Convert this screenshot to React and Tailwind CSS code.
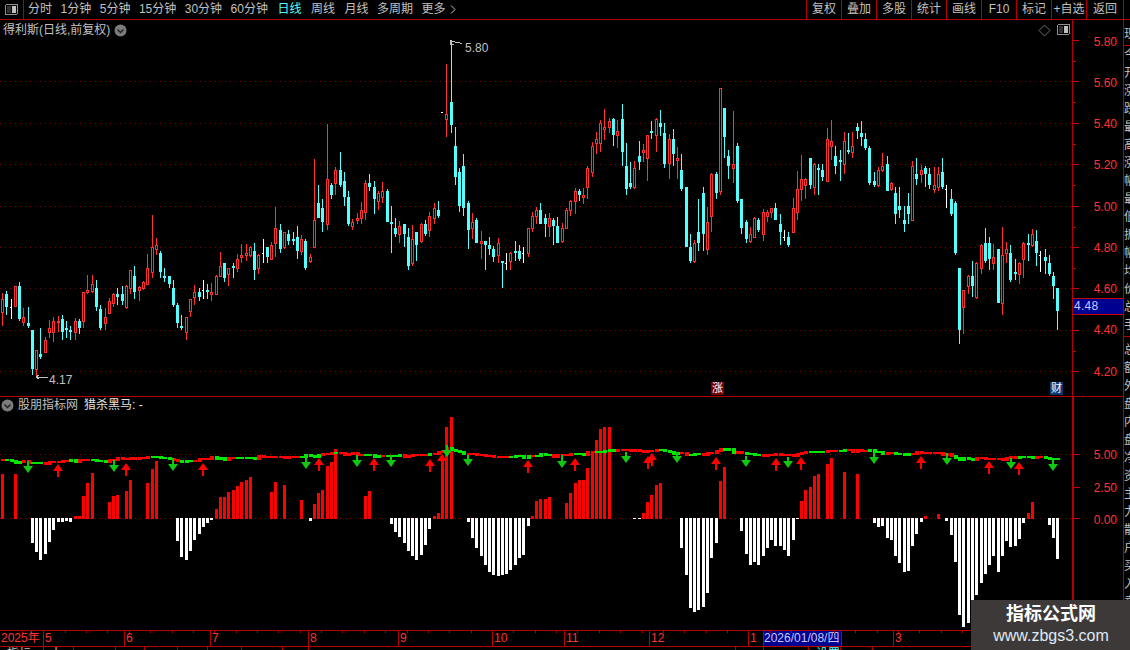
import React from 'react';

const RED = '#ff3232';
const CYAN = '#54ffff';
const PITCH = 4.273;
const barX = (i) => Math.floor(2.5 + i * PITCH);

// t wickTop bodyTop bodyBottom wickBottom, in screen pixels
const CANDLES = `r 293 299 313 326,c 291 294 307 315,w 299 307 308 319,r 286 286 307 307,c 282 286 319 321,r 308 317 323 326,c 307 323 326 328,c 330 330 369 375,r 350 350 370 377,c 328 354 357 359,
r 337 340 353 353,r 320 328 333 338,r 317 321 333 342,r 316 321 323 332,c 315 319 332 340,c 321 328 330 338,c 326 330 332 340,r 318 321 333 340,c 319 321 328 334,r 292 292 322 328,
r 275 290 293 294,r 275 284 292 293,c 280 288 307 311,c 305 309 328 330,r 308 317 324 330,r 298 301 314 314,r 293 294 304 307,c 288 294 297 305,c 286 294 301 305,r 285 286 308 309,
r 270 270 289 294,c 266 276 292 299,r 286 287 291 301,r 281 282 289 290,r 254 268 285 285,r 215 247 273 278,r 238 245 250 255,c 251 253 272 278,c 268 276 278 282,c 276 276 284 288,
c 280 288 305 307,c 303 305 323 328,c 315 326 328 330,r 317 317 333 340,r 299 299 312 317,r 285 292 298 305,c 288 292 297 301,w 280 290 291 299,c 284 290 292 299,r 283 292 295 301,
r 275 276 295 295,r 252 266 277 277,c 263 263 278 282,r 268 268 275 286,c 263 266 268 278,r 254 259 269 272,r 244 255 258 263,r 244 253 256 261,r 246 247 256 257,c 243 251 270 280,
r 254 255 269 274,w 239 253 254 263,c 247 247 257 263,r 242 245 260 260,r 207 228 244 257,c 224 230 249 253,r 232 232 248 249,c 230 234 241 245,c 232 239 241 245,c 226 237 251 259,
r 235 239 252 255,c 239 241 268 270,r 254 257 262 263,r 159 220 248 248,c 185 203 218 218,c 199 208 222 232,r 124 179 225 230,c 183 185 195 199,r 167 170 184 195,c 152 170 185 187,
c 172 181 197 206,c 191 197 224 226,r 219 222 227 230,r 213 218 221 224,r 202 210 219 224,r 180 183 213 220,c 174 183 187 191,c 181 187 199 214,r 191 193 202 210,r 182 191 198 203,
c 189 191 222 222,c 206 222 224 253,c 218 228 234 237,r 221 226 235 243,c 224 224 234 247,c 228 237 266 270,r 225 239 264 266,c 232 232 245 261,r 223 224 242 243,c 220 224 234 236,
r 212 216 231 237,r 203 208 219 224,c 201 210 216 218,w 112 112 113 113,r 64 114 120 137,c 40 102 125 133,c 127 146 177 185,c 168 172 206 212,c 154 166 208 216,c 201 203 230 249,
r 213 222 229 239,c 218 220 243 243,r 231 241 244 259,c 241 241 245 270,c 237 245 249 255,c 246 249 257 262,r 238 243 256 263,c 261 261 263 288,w 253 263 264 270,r 252 253 262 270,
c 241 251 253 261,c 245 251 259 261,w 247 253 254 263,r 228 228 254 257,r 212 216 229 232,r 207 210 217 224,c 203 210 224 224,c 214 218 224 237,r 213 218 227 237,c 218 220 226 245,
c 217 226 243 243,r 223 228 242 243,r 208 210 229 229,r 200 201 211 216,r 188 191 202 214,c 189 191 195 201,r 188 195 198 204,r 166 168 188 199,r 142 146 173 177,r 132 139 144 154,
r 120 123 144 152,r 109 127 130 140,r 118 121 128 133,c 118 119 135 146,r 120 131 136 148,c 104 119 152 166,c 143 166 189 195,c 162 183 187 189,r 161 168 188 189,c 141 156 162 170,
r 144 150 153 162,r 135 135 159 181,c 121 131 133 139,r 118 119 136 152,c 110 123 127 136,c 123 133 164 168,r 134 139 164 179,c 129 139 154 166,r 147 158 161 179,c 154 170 189 191,
c 187 187 247 247,c 234 247 261 263,r 240 243 262 263,c 199 232 243 251,c 187 193 234 251,r 207 222 250 255,r 173 174 217 232,c 172 174 193 199,r 88 88 192 195,c 108 108 137 158,
c 150 156 166 179,r 111 164 169 183,c 143 146 201 203,c 199 199 228 234,c 220 222 239 243,r 227 234 242 243,r 217 218 238 238,c 218 220 230 232,r 209 212 235 241,r 210 212 217 222,
r 208 208 213 218,c 203 208 220 220,c 214 224 232 245,w 230 237 238 241,c 232 237 245 247,r 198 208 233 233,r 171 189 213 220,r 155 179 190 201,r 178 179 186 199,c 158 158 185 189,
r 163 164 188 195,c 164 168 170 195,c 164 170 177 181,r 128 139 182 182,r 120 141 147 160,c 146 156 166 174,c 150 160 162 181,r 132 141 165 174,c 133 150 152 154,r 132 146 153 158,
c 123 127 131 139,c 121 133 137 146,c 133 139 148 150,c 146 148 183 185,c 172 181 185 187,r 167 170 186 187,r 153 166 171 172,c 156 164 191 191,r 182 183 190 191,c 187 193 214 224,
c 187 206 210 218,c 206 220 224 232,c 193 206 214 224,r 161 166 221 221,c 158 174 179 185,r 165 170 175 183,c 166 168 174 187,c 168 174 185 189,r 167 185 190 193,r 167 174 188 191,
c 158 172 187 189,w 185 189 190 208,c 189 199 214 216,c 201 203 253 255,c 268 268 330 344,r 290 290 308 334,r 275 276 287 294,c 261 276 286 297,r 262 263 298 299,r 244 245 269 274,
c 228 243 261 263,c 237 243 259 270,r 244 257 264 270,c 249 249 303 303,r 227 255 304 315,r 242 249 254 263,c 245 253 280 282,c 259 272 274 280,r 262 263 275 284,r 242 243 260 278,
c 234 243 245 261,r 229 234 246 247,c 230 241 253 266,w 251 255 256 272,c 249 257 261 274,c 255 263 274 276,c 272 276 286 299,c 288 288 311 330`
  .split(',')
  .map((s) => {
    const p = s.trim().split(' ');
    return { t: p[0], a: +p[1], b: +p[2], c: +p[3], d: +p[4] };
  });

// histogram height from the zero line: red up, white (negative) down
const HIST_RUNS = [
  [0, 45, 0, 0, 45],
  [7, -25, -34, -42, -36, -24, -12, -4, -4, -3, -4, 3, 3, 23, 36, 46],
  [25, 17, 23, 24, 0, 28, 39, 0, 0, 0, 36, 50, 58],
  [41, -23, -39, -42, -33, -22, -16, -9, -5, -2, 10, 22, 22, 27, 29, 33, 37, 39, 42],
  [63, 27, 37, 0, 34, 0, 0, 0, 19, 0, -3, 15, 26, 29, 53, 57, 70],
  [85, 23, 28],
  [91, -6, -14, -19, -25, -33, -38, -42, -37, -27, -11, 3, 6, 63, 92, 102],
  [109, -4, -20, -30, -38, -47, -54, -57, -58, -57, -56, -52, -47, -40, -37, -8, 3, 18, 20, 20, 22],
  [132, 16, 26, 36, 39, 39, 51, 68, 79, 90, 92, 92],
  [148, -1, -1, 6, 17, 24, 34, 36],
  [159, -30, -57, -90, -94, -92, -89, -75, -40, -25, 38, 52],
  [173, -13, -36, -47, -44, -47, -38, -30, -22, -28, -28, -32, -38, -22, -1, 18, 29, 32, 43, 45, 0, 55, 61],
  [197, 47, 0, 0, 45],
  [204, -5, -9, -8, -20, -22, -38, -45, -54, -53, -28, -16, -4, 3, 0, 0, 5],
  [221, -3, -17, -44, -97, -109, -105, -100, -77, -65, -56, -47, -38, -54, -38, -23, -29, -28, -21, -5, 6, 17],
  [245, -7, -20, -41],
];
const hist = new Array(248).fill(0);
HIST_RUNS.forEach(([start, ...vals]) => vals.forEach((v, k) => (hist[start + k] = v)));

const BAND = [[2,460],[33,463],[50,462],[83,460],[103,461],[133,458],[153,457],[167,458],[183,462],[200,459],[233,458],[267,457],[300,457],[313,456],[323,454],[337,453],[357,455],[393,456],[427,455],[447,449],[463,453],[493,457],[527,456],[560,455],[587,453],[613,450],[643,451],[660,450],[687,455],[710,453],[720,449],[737,452],[745,454],[760,455],[790,455],[807,452],[830,451],[857,450],[873,452],[890,453],[903,455],[910,453],[940,453],[953,456],[958,460],[973,458],[997,459],[1013,458],[1033,456],[1057,460]];

const bandY = (x) => {
  for (let k = 1; k < BAND.length; k++) {
    if (x <= BAND[k][0]) {
      const [x0, y0] = BAND[k - 1];
      const [x1, y1] = BAND[k];
      return y0 + ((y1 - y0) * (x - x0)) / (x1 - x0);
    }
  }
  return 460;
};

const RED_ARROWS = [[58,464],[126,463],[203,463],[319,458],[374,458],[430,459],[442,454],[528,460],[575,458],[648,456],[652,453],[716,457],[776,458],[801,457],[921,456],[989,461],[1019,462]];
const GREEN_ARROWS = [[28,461,473],[114,460,472],[173,458,471],[306,457,469],[357,455,467],[391,455,467],[447,445,457],[468,455,466],[562,455,468],[626,452,463],[677,452,463],[746,456,467],[788,457,468],[874,453,464],[947,453,465],[1011,458,469],[1053,460,471]];

const PRICES = ['5.80', '5.60', '5.40', '5.20', '5.00', '4.80', '4.60', '4.40', '4.20'];
const NAV = ['分时', '1分钟', '5分钟', '15分钟', '30分钟', '60分钟', '日线', '周线', '月线', '多周期'];
const TOOLS = ['复权', '叠加', '多股', '统计', '画线', 'F10', '标记', '+自选'];
const SIDE_TOP = '现价';
const SIDE_MID = '今开涨跌最高涨幅最低振幅均价总手量比现手换手';
const SIDE_LOW = '总额外盘内盘净资主力散户买入卖出市盈市净流通总股';

const CircleChevron = () => (
  <svg width="13" height="13" viewBox="0 0 13 13">
    <circle cx="6.5" cy="6.5" r="6" fill="#7c7c7c" />
    <path d="M3.5 5.5 L6.5 8.5 L9.5 5.5" fill="none" stroke="#222" strokeWidth="1.5" />
  </svg>
);

const PanelIcon = () => (
  <svg width="13" height="11" viewBox="0 0 13 11" shapeRendering="crispEdges">
    <rect x="0.5" y="0.5" width="12" height="10" rx="1.5" fill="#000" stroke="#909090" />
    <rect x="2" y="2" width="4" height="7" fill="#333" />
    <rect x="7" y="2" width="4" height="7" fill="#c0c0c0" />
  </svg>
);

const Candles = () => (
  <svg className="block" width="1072" height="376" viewBox="0 20 1072 376" shapeRendering="crispEdges">
    {[81, 123, 164, 206, 247, 288, 330, 371].map((y) => (
      <line key={y} x1="0" x2="1072" y1={y + 0.5} y2={y + 0.5} stroke="#8a0000" strokeDasharray="1 4" />
    ))}
    {CANDLES.map((k, i) => {
      const x = barX(i);
      if (k.t === 'w') {
        return (
          <g key={i} fill="#fff">
            <rect x={x} y={k.a} width="1" height={k.d - k.a} />
            <rect x={x - 1} y={k.b} width="2" height="1" />
          </g>
        );
      }
      const color = k.t === 'r' ? RED : CYAN;
      return (
        <g key={i}>
          <rect x={x} y={k.a} width="1" height={k.d - k.a} fill={color} />
          {k.t === 'r' ? (
            <rect x={x - 0.5} y={k.b + 0.5} width="2" height={Math.max(k.c - k.b - 1, 1)} fill="#000" stroke={color} />
          ) : (
            <rect x={x - 1} y={k.b} width="3" height={Math.max(k.c - k.b, 1)} fill={color} />
          )}
        </g>
      );
    })}
    <path d="M450 41h5M451 44h3M455 43l3-1 4 2" fill="none" stroke="#c0c0c0" />
    <rect x="450" y="40" width="1" height="5" fill="#c0c0c0" />
    <path d="M36 377h12M36 377l3-2M36 377l3 2" fill="none" stroke="#c0c0c0" />
  </svg>
);

const Indicator = () => {
  const blocks = [];
  let prev = Math.round(bandY(barX(0)));
  hist.forEach((_, i) => {
    const x = barX(i);
    const y = Math.round(bandY(x) + (i % 7 === 3 ? 1.4 : 0) - (i % 11 === 5 ? 1.2 : 0));
    const green = Math.sin(i * 0.9) + Math.sin(i * 0.37) > 0.15;
    blocks.push(
      <rect
        key={i}
        x={x - 1}
        y={Math.min(prev, y) - 1}
        width="4"
        height={Math.abs(y - prev) + 2}
        fill={green ? '#00e800' : '#ff0000'}
      />
    );
    prev = y;
  });
  return (
    <svg className="block" width="1072" height="233" viewBox="0 397 1072 233" shapeRendering="crispEdges">
      <line x1="0" x2="1072" y1="454.5" y2="454.5" stroke="#8a0000" strokeDasharray="1 4" />
      <line x1="0" x2="1072" y1="518.5" y2="518.5" stroke="#8a0000" strokeDasharray="1 4" />
      {hist.map((v, i) =>
        v === 0 ? null : v > 0 ? (
          <rect key={i} x={barX(i) - 1} y={519 - v} width="3" height={v} fill="#ff0000" />
        ) : (
          <rect key={i} x={barX(i) - 1} y={518} width="3" height={-v} fill="#ffffff" />
        )
      )}
      {blocks}
      <g shapeRendering="auto">
        {RED_ARROWS.map(([x, y]) => (
          <path key={x} d={`M${x} ${y}l5 7h-4v6h-2v-6h-4z`} fill="#ff0000" />
        ))}
        {GREEN_ARROWS.map(([x, top, tip]) => (
          <path key={x} d={`M${x - 1} ${top}h2v${tip - top - 7}h4l-5 7l-5 -7h4z`} fill="#10c810" />
        ))}
      </g>
    </svg>
  );
};

const AxisTicks = ({ ys, minor }) => (
  <svg className="absolute left-0 top-0" width="8" height="376" shapeRendering="crispEdges">
    {ys.map((y) => (
      <rect key={y} x="0" y={y} width="6" height="1" fill="#c80000" />
    ))}
    {minor.map((y) => (
      <rect key={y} x="0" y={y} width="3" height="1" fill="#c80000" />
    ))}
  </svg>
);

const DateSeg = ({ w, children }) => (
  <div className={`${w} shrink-0 border-r border-[#b40000] pl-[1px] text-[12px] leading-[15px] text-[#ff3232]`}>{children}</div>
);

const SideChars = ({ text }) => (
  <div className="flex flex-col">
    {text.split('').map((c, i) => (
      <span key={i} className="h-[18px] shrink-0">{c}</span>
    ))}
  </div>
);

const App = () => (
  <div className="relative flex h-[650px] w-[1130px] flex-col overflow-hidden bg-black font-['Liberation_Sans','Noto_Sans_CJK_SC',sans-serif] text-[12px] text-[#c0c0c0]">
    {/* top toolbar */}
    <div className="flex h-[20px] shrink-0 items-stretch border-b border-[#b40000] leading-[19px]">
      <div className="flex w-[24px] items-center justify-center border-r border-[#b40000] pr-[1px]">
        <PanelIcon />
      </div>
      <div className="flex items-center gap-[8.5px] pl-[4px]">
        {NAV.map((n) => (
          <span key={n} className={n === '日线' ? 'mx-[1px] text-[#54ffff]' : n === '周线' ? 'mr-[1px]' : ''}>{n}</span>
        ))}
        <span className="flex items-center gap-[4px]">
          更多
          <svg width="6" height="9" viewBox="0 0 6 9">
            <path d="M1 0.5 L5 4.5 L1 8.5" fill="none" stroke="#c0c0c0" />
          </svg>
        </span>
      </div>
      <div className="ml-auto mr-[6px] flex">
        {TOOLS.map((t) => (
          <div key={t} className="w-[35px] whitespace-nowrap border-l border-[#b40000] text-center">{t}</div>
        ))}
        <div className="w-[38px] border-x border-[#b40000] text-center">返回</div>
      </div>
    </div>

    <div className="flex min-h-0 flex-1">
      <div className="flex w-[1124px] flex-col">
        {/* price pane */}
        <div className="flex h-[377px] shrink-0 border-b border-[#b40000]">
          <div className="relative w-[1072px]">
            <Candles />
            <div className="absolute left-[3px] top-[2px] flex items-center gap-[4px] leading-[16px]">
              <span>得利斯(日线,前复权)</span>
              <CircleChevron />
            </div>
            <svg className="absolute left-[1038px] top-[4px]" width="13" height="13" viewBox="0 0 13 13">
              <path d="M6.5 1 L12 6.5 L6.5 12 L1 6.5 Z" fill="none" stroke="#707070" />
            </svg>
            <div className="absolute left-[1057px] top-[4px]"><PanelIcon /></div>
            <span className="absolute left-[465px] top-[19px]">5.80</span>
            <span className="absolute left-[49px] top-[351px]">4.17</span>
            <span className="absolute left-[711px] top-[362px] flex h-[13px] w-[13px] items-center justify-center bg-[#7a0000] text-[11px] text-white">涨</span>
            <span className="absolute left-[1050px] top-[362px] flex h-[13px] w-[13px] items-center justify-center bg-[#0a3a78] text-[11px] text-white">财</span>
          </div>
          <div className="relative w-[52px] border-x border-[#b40000] pt-[1px] text-[#ff3232]">
            <AxisTicks ys={[20, 61, 103, 144, 186, 227, 268, 310, 351]} minor={[41, 82, 124, 165, 207, 248, 289, 331]} />
            <div className="flex flex-col items-end pr-[6px]">
              {PRICES.map((p) => (
                <div key={p} className="flex h-[41.25px] shrink-0 items-center">{p}</div>
              ))}
            </div>
            <div className="absolute left-0 top-[278px] h-[17px] w-[50px] border-y border-[#c80000] bg-[#000090] pl-[1px] leading-[15px] tracking-[0.3px] text-[#c8c8ff]">4.48</div>
          </div>
        </div>

        {/* indicator pane */}
        <div className="flex h-[234px] shrink-0 border-b border-[#b40000]">
          <div className="relative w-[1072px]">
            <Indicator />
            <div className="absolute left-[1px] top-0 flex items-center leading-[16px]">
              <CircleChevron />
              <span className="ml-[4px]">股朋指标网</span>
              <span className="ml-[6px] text-[#e4e4e4]">猎杀黑马: -</span>
            </div>
          </div>
          <div className="relative w-[52px] border-y-0 border-l-2 border-r border-[#b40000] pt-[42px] text-[#ff3232]">
            <AxisTicks ys={[57, 90, 121]} minor={[]} />
            <div className="flex flex-col items-end pr-[6px]">
              {['5.00', '2.50', '0.00'].map((p) => (
                <div key={p} className="flex h-[32.5px] shrink-0 items-center">{p}</div>
              ))}
            </div>
          </div>
        </div>

        {/* date axis */}
        <div className="relative flex h-[16px] shrink-0 border-b border-[#b40000]">
          <DateSeg w="w-[44px]">2025年</DateSeg>
          <DateSeg w="w-[81px]">5</DateSeg>
          <DateSeg w="w-[86px]">6</DateSeg>
          <DateSeg w="w-[98px]">7</DateSeg>
          <DateSeg w="w-[90px]">8</DateSeg>
          <DateSeg w="w-[94px]">9</DateSeg>
          <DateSeg w="w-[72px]">10</DateSeg>
          <DateSeg w="w-[85px]">11</DateSeg>
          <DateSeg w="w-[99px]">12</DateSeg>
          <DateSeg w="w-[15px]">1</DateSeg>
          <div className="w-[78px] shrink-0 whitespace-nowrap border-r border-[#b40000] bg-[#000090] leading-[15px] text-[#c8c8ff]">2026/01/08/四</div>
          <div className="w-[52px] shrink-0 border-r border-[#b40000]" />
          <div className="pl-[1px] leading-[15px] text-[#ff3232]">3</div>
          <svg className="absolute left-0 top-0" width="1072" height="3" shapeRendering="crispEdges">
            {hist.map((_, i) => (i % 5 === 0 ? <rect key={i} x={barX(i) + 20} y="0" width="1" height="2" fill="#b40000" /> : null))}
          </svg>
          <div className="absolute left-[1071px] top-0 h-[15px] w-[52px] border-x border-[#b40000]" />
        </div>

        {/* clipped tab row */}
        <div className="flex h-[3px] shrink-0 overflow-hidden leading-[15px] text-[#c0c0c0]">
          <div className="w-[44px] border-r border-[#b40000] pl-[7px]">指标</div>
          <div className="w-[30px] border-r border-[#b40000] pl-[6px]">十</div>
          <div className="w-[42px] border-r border-[#b40000]" />
          <div className="w-[29px] border-r border-[#b40000]" />
          <div className="w-[33px] border-r border-[#b40000]" />
          <div className="w-[30px] border-r border-[#b40000]" />
          <div className="w-[34px] border-r border-[#b40000]" />
          <div className="w-[41px] border-r border-[#b40000]" />
          <div className="w-[26px] border-r border-[#b40000]" />
          <div className="w-[427px] border-r border-[#b40000]" />
          <div className="w-[28px] border-r border-[#b40000]" />
          <div className="w-[45px] border-r border-[#b40000]" />
          <div className="w-[32px] border-r border-[#b40000] pl-[7px] text-[#54ffff]">设置</div>
          <div className="w-[32px] border-r border-[#b40000]" />
        </div>
      </div>

      {/* cut-off side panel */}
      <div className="flex w-[6px] flex-col overflow-hidden leading-[18px]">
        <div className="h-[26px] shrink-0 overflow-hidden border-b border-[#b40000] pt-[5px]">
          <SideChars text={SIDE_TOP} />
        </div>
        <div className="h-[291px] shrink-0 overflow-hidden border-b border-[#b40000]">
          <SideChars text={SIDE_MID} />
        </div>
        <div className="min-h-0 flex-1 overflow-hidden pt-[4px]">
          <SideChars text={SIDE_LOW} />
        </div>
      </div>
    </div>

    {/* site watermark */}
    <div className="absolute bottom-0 right-0 flex h-[50px] w-[159px] flex-col items-center bg-[#3e3939] pl-[1px] text-white">
      <span className="mt-[2px] text-[18px] font-bold leading-[24px]">指标公式网</span>
      <span className="text-[16px] leading-[20px] text-[#dfe9f5]">www.zbgs3.com</span>
    </div>
  </div>
);

export default App;
